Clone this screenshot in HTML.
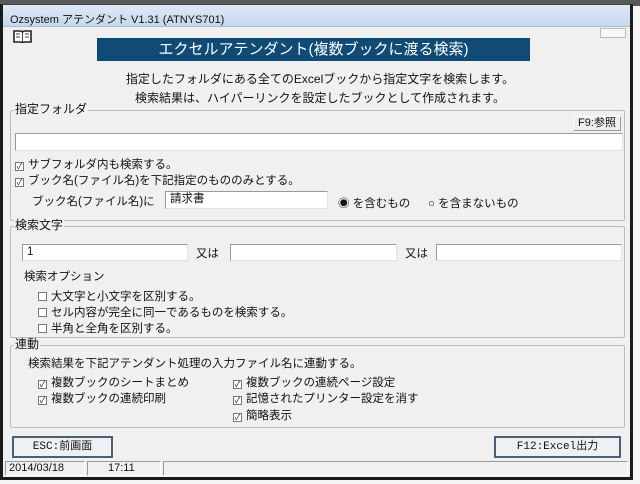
<!DOCTYPE html><html><head><meta charset="utf-8"><style>
*{margin:0;padding:0;box-sizing:border-box}
body{width:640px;height:484px;background:#f4f4f4;position:relative;overflow:hidden;font-family:"Liberation Sans","Noto Sans CJK JP",sans-serif;font-size:11.5px;color:#111}
.a{position:absolute;white-space:nowrap}
#top{position:absolute;left:0;top:0;width:640px;height:6px;background:#5a5a5a}
#win{position:absolute;left:0;top:4px;width:633px;height:476px;background:#f0f0f0;border:3px solid #1a1a1a;border-top:1px solid #444}
#title{position:absolute;left:3px;top:5px;width:627px;height:22px;background:linear-gradient(#dde9f6,#c6d8ed);border-bottom:1px solid #a9bfd8}
.box{position:absolute;border:1px solid #bcbcbc;border-radius:2px}
.inp{position:absolute;background:#fff;border:1px solid #9a9a9a;border-right-color:#e3e3e3;border-bottom-color:#e3e3e3;padding-left:4px;line-height:15px}
.lbl{position:absolute;background:#f0f0f0;padding:0 1px;line-height:13px}
.btn{position:absolute;border:2px solid #4a5f78;background:#eef0f3;text-align:center;font-family:"Liberation Mono","Noto Sans CJK JP",monospace;font-size:11px}
.cb{display:inline-block;width:9px;height:9px;border:1px solid #777;background:#fff;margin-right:4px;vertical-align:-1px;font-size:8px;line-height:7px;text-align:center}
.st{position:absolute;top:461px;height:15px;border:1px solid #999;border-right-color:#fff;border-bottom-color:#fff;font-size:11px;line-height:13px}
</style></head><body>
<div id="top"></div>
<div id="win"></div>
<div id="title"></div>
<div class="a" style="left:10px;top:11px;font-size:11px">Ozsystem アテンダント V1.31 (ATNYS701)</div>
<svg class="a" style="left:13px;top:29px" width="19" height="14" viewBox="0 0 19 14"><path d="M1 2h7l1.5 1 1.5-1h7v11h-7l-1.5 1-1.5-1h-7z" fill="#fff" stroke="#222" stroke-width="1.6"/><path d="M9.5 3v10M3 5h4M3 8h4M12 5h4M12 8h4" stroke="#444" stroke-width="1"/></svg>
<div class="a" style="left:600px;top:28px;width:26px;height:10px;border:1px solid #bbb;background:#f7f7f7"></div>
<div class="a" style="left:97px;top:38px;width:433px;height:23px;background:#0f4b75;color:#fff;font-size:15px;text-align:center;line-height:23px">エクセルアテンダント(複数ブックに渡る検索)</div>
<div class="a" style="left:0;width:640px;top:70px;text-align:center;font-size:12px">指定したフォルダにある全てのExcelブックから指定文字を検索します。</div>
<div class="a" style="left:0;width:640px;top:89px;text-align:center;font-size:12px">検索結果は、ハイパーリンクを設定したブックとして作成されます。</div>

<div class="box" style="left:10px;top:110px;width:615px;height:111px"></div>
<div class="lbl" style="left:14px;top:103px;font-size:12px">指定フォルダ</div>
<div class="a" style="left:573px;top:116px;width:48px;height:15px;border:1px solid #999;border-top-color:#fff;border-left-color:#fff;background:#eee;font-size:11px;text-align:center;line-height:13px">F9:参照</div>
<div class="inp" style="left:15px;top:133px;width:608px;height:18px"></div>
<div class="a" style="left:15px;top:156px"><span class="cb">✓</span>サブフォルダ内も検索する。</div>
<div class="a" style="left:15px;top:172px"><span class="cb">✓</span>ブック名(ファイル名)を下記指定のもののみとする。</div>
<div class="a" style="left:32px;top:193px">ブック名(ファイル名)に</div>
<div class="inp" style="left:165px;top:191px;width:163px;height:18px">請求書</div>
<div class="a" style="left:338px;top:195px">◉ を含むもの</div>
<div class="a" style="left:428px;top:195px">○ を含まないもの</div>

<div class="box" style="left:10px;top:226px;width:615px;height:112px"></div>
<div class="lbl" style="left:14px;top:219px;font-size:12px">検索文字</div>
<div class="inp" style="left:22px;top:244px;width:166px;height:17px">1</div>
<div class="a" style="left:196px;top:245px">又は</div>
<div class="inp" style="left:230px;top:244px;width:167px;height:17px"></div>
<div class="a" style="left:405px;top:245px">又は</div>
<div class="inp" style="left:436px;top:244px;width:186px;height:17px"></div>
<div class="a" style="left:24px;top:268px">検索オプション</div>
<div class="a" style="left:38px;top:288px"><span class="cb"></span>大文字と小文字を区別する。</div>
<div class="a" style="left:38px;top:304px"><span class="cb"></span>セル内容が完全に同一であるものを検索する。</div>
<div class="a" style="left:38px;top:320px"><span class="cb"></span>半角と全角を区別する。</div>

<div class="box" style="left:10px;top:345px;width:615px;height:83px"></div>
<div class="lbl" style="left:14px;top:338px;font-size:12px">連動</div>
<div class="a" style="left:28px;top:355px">検索結果を下記アテンダント処理の入力ファイル名に連動する。</div>
<div class="a" style="left:38px;top:374px"><span class="cb">✓</span>複数ブックのシートまとめ</div>
<div class="a" style="left:38px;top:390px"><span class="cb">✓</span>複数ブックの連続印刷</div>
<div class="a" style="left:233px;top:374px"><span class="cb">✓</span>複数ブックの連続ページ設定</div>
<div class="a" style="left:233px;top:390px"><span class="cb">✓</span>記憶されたプリンター設定を消す</div>
<div class="a" style="left:233px;top:407px"><span class="cb">✓</span>簡略表示</div>

<div class="btn" style="left:12px;top:436px;width:101px;height:22px;line-height:18px">ESC:前画面</div>
<div class="btn" style="left:494px;top:436px;width:127px;height:22px;line-height:18px">F12:Excel出力</div>
<div class="st" style="left:5px;width:80px;padding-left:3px">2014/03/18</div>
<div class="st" style="left:87px;width:74px;padding-left:20px">17:11</div>
<div class="st" style="left:163px;width:465px"></div>
</body></html>
